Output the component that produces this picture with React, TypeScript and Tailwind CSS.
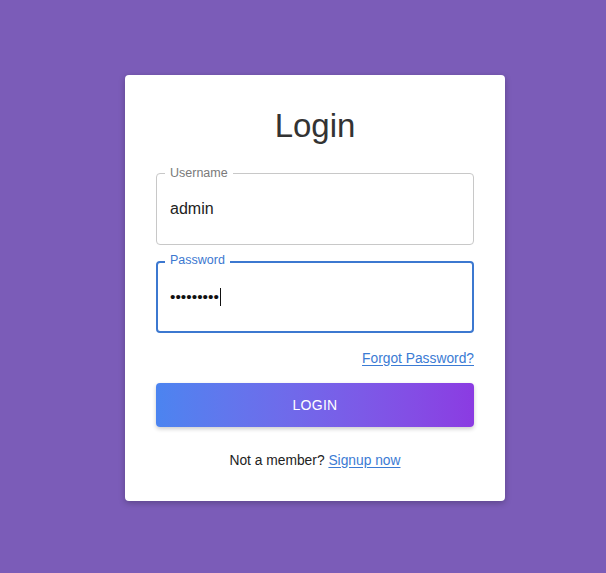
import React from "react";

export default function App() {
  return (
    <div
      className="min-h-[573px] w-full flex items-start pt-[75px] pl-[125px] bg-[#7b5cb8]"
      style={{ fontFamily: '"Liberation Sans", Arial, Helvetica, sans-serif' }}
    >
      <div className="w-[380px] bg-white rounded-[4px] shadow-[0_2px_6px_rgba(0,0,0,0.25)] px-[31px] pt-[31px] pb-[30px] flex flex-col">
        <h1 className="text-center text-[33px] leading-[40px] text-[#333333] font-normal">Login</h1>

        <div className="relative mt-[27px] h-[72px] border border-[#c8c8c8] rounded-[4px] flex items-center pl-[13px]">
          <span className="absolute left-[8px] top-[-8px] px-[5px] bg-white text-[12.5px] leading-[14px] text-[#7a7a7a]">
            Username
          </span>
          <span className="text-[16px] leading-[18px] text-[#222222]">admin</span>
        </div>

        <div className="relative mt-[16px] h-[72px] border-2 border-[#3c78d0] rounded-[4px] flex items-center pl-[12px]">
          <span className="absolute left-[7px] top-[-10px] px-[5px] bg-white text-[12.5px] leading-[14px] text-[#3c78d0]">
            Password
          </span>
          <span className="text-[15.5px] leading-[18px] text-[#111111]">•••••••••</span>
          <span className="ml-[1px] w-[1.5px] h-[18px] bg-[#111111]" />
        </div>

        <div className="mt-[16px] flex justify-end">
          <a href="#" className="text-[13.8px] leading-[20px] text-[#3b7bd4] underline underline-offset-2">
            Forgot Password?
          </a>
        </div>

        <button className="mt-[14px] h-[44px] w-full rounded-[4px] bg-gradient-to-r from-[#4b84f0] to-[#8b3be2] text-white text-[14px] tracking-[0.3px] shadow-[0_2px_4px_rgba(0,0,0,0.2)] flex items-center justify-center">
          LOGIN
        </button>

        <p className="mt-[24px] text-center text-[13.8px] leading-[20px] text-[#222222]">
          Not a member?{" "}
          <a href="#" className="text-[#3b7bd4] underline underline-offset-2">
            Signup now
          </a>
        </p>
      </div>
    </div>
  );
}
